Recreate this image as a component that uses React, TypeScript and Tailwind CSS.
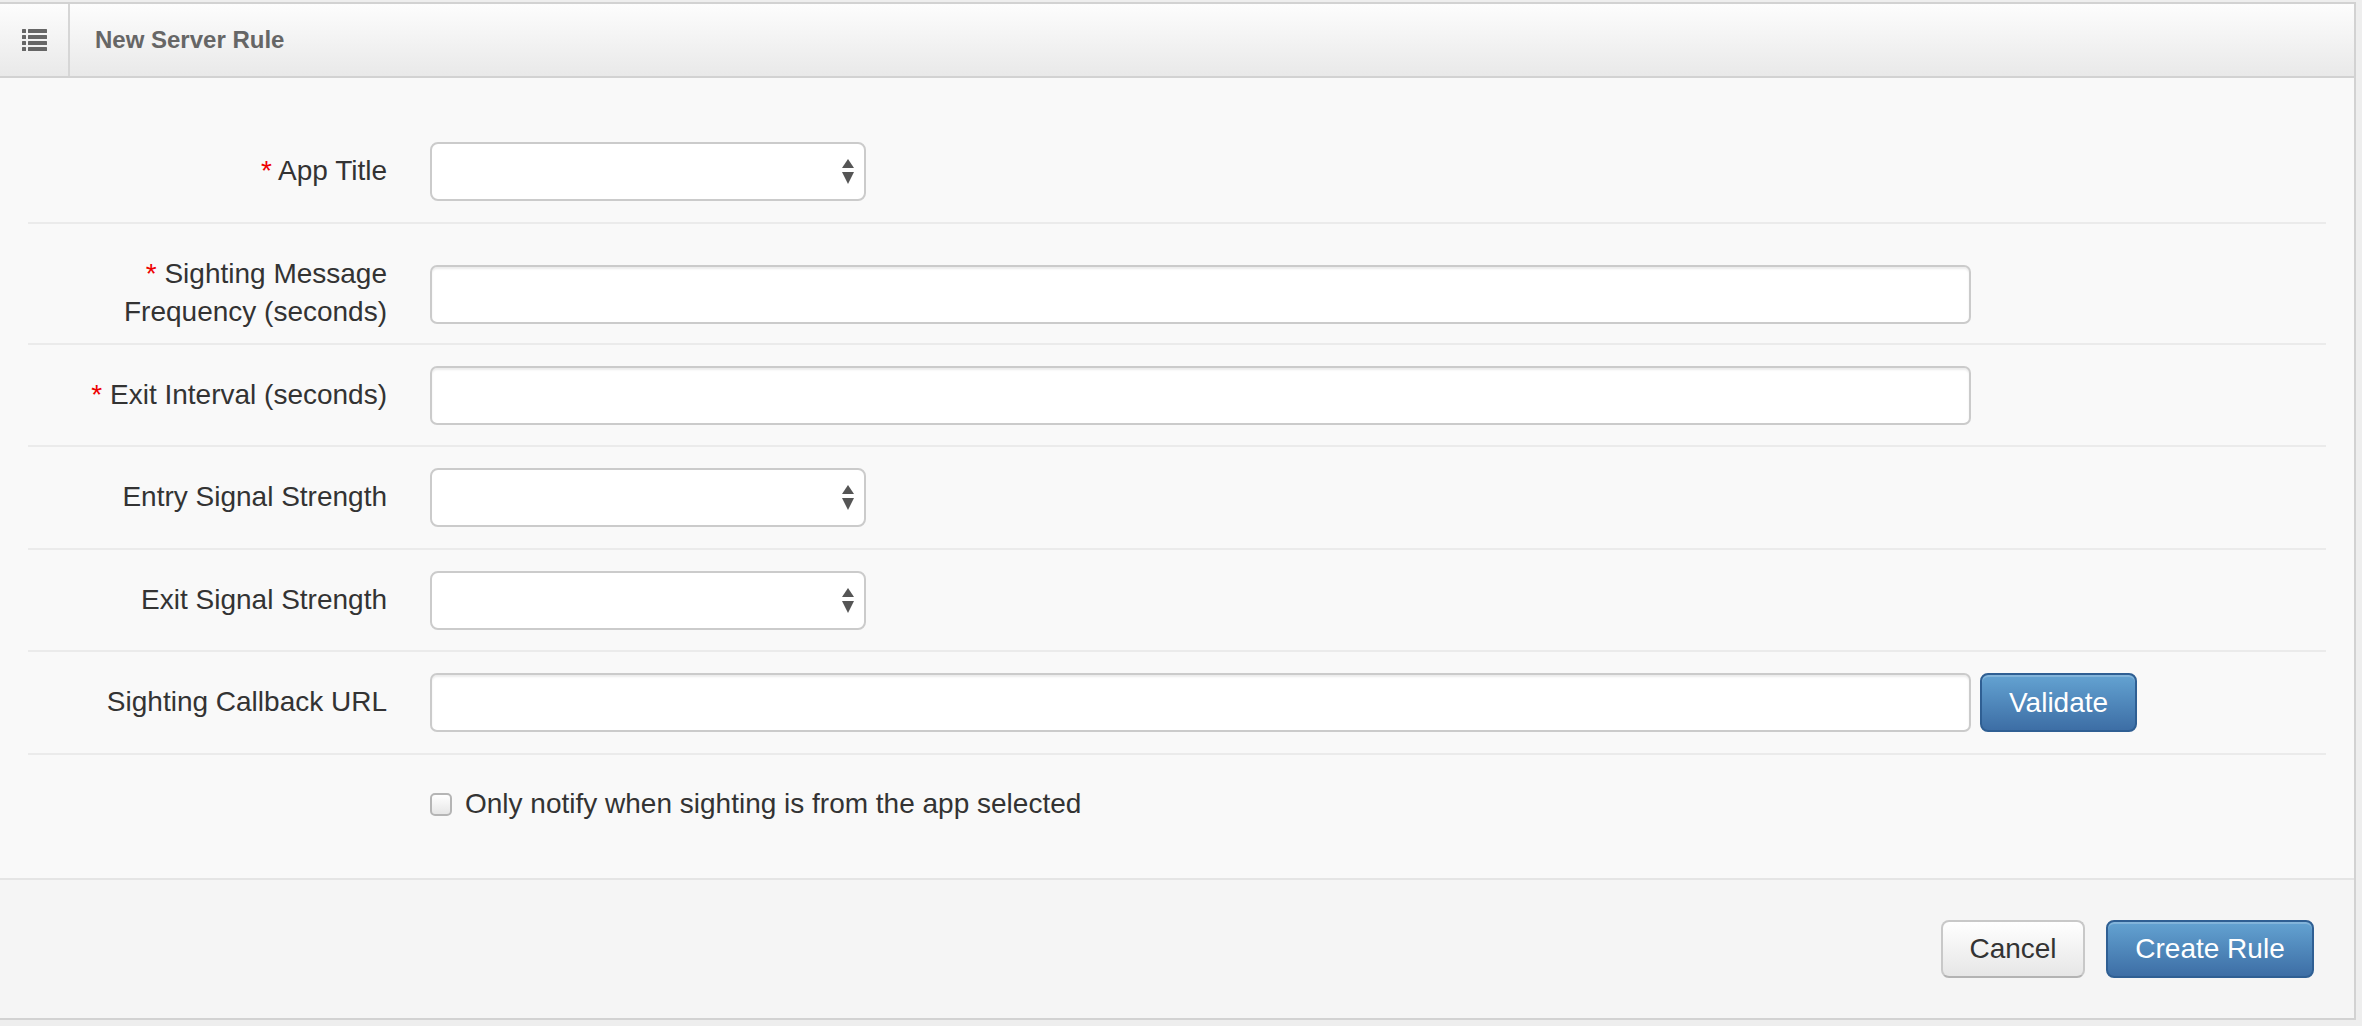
import React from "react";

function ListIcon() {
  return (
    <svg width="25" height="22" viewBox="0 0 25 22" fill="#666">
      {[0, 6, 12, 18].map((y) => (
        <g key={y}>
          <rect x="0" y={y} width="4" height="4" rx="0.5" />
          <rect x="6" y={y} width="19" height="4" rx="0.5" />
        </g>
      ))}
    </svg>
  );
}

function SelectArrows() {
  return (
    <svg width="12" height="25" viewBox="0 0 12 25" fill="#555">
      <polygon points="6,0 12,9 0,9" />
      <polygon points="0,13 12,13 6,25" />
    </svg>
  );
}

function Label({
  children,
  required,
  tall,
}: {
  children: React.ReactNode;
  required?: boolean;
  tall?: boolean;
}) {
  return (
    <div
      className={
        tall
          ? "w-[359px] shrink-0 pt-[10px] pb-[1.5px] text-right text-[28px] leading-[38px] text-[#333]"
          : "w-[359px] shrink-0 pt-[10px] text-right text-[28px] leading-[38px] text-[#333]"
      }
    >
      {required && <span className="text-[#e00]">* </span>}
      {children}
    </div>
  );
}

function SelectBox() {
  return (
    <div className="mb-[10px] flex h-[59px] w-[436px] items-center justify-end rounded-[8px] border-2 border-[#cbcbcb] bg-white pr-[10px]">
      <SelectArrows />
    </div>
  );
}

function TextInput({ flush }: { flush?: boolean }) {
  return (
    <div
      className={
        flush
          ? "h-[59px] w-[1541px] rounded-[7px] border-2 border-[#cbcbcb] bg-white shadow-[inset_0_2px_2px_rgba(0,0,0,0.075)]"
          : "mb-[10px] h-[59px] w-[1541px] rounded-[7px] border-2 border-[#cbcbcb] bg-white shadow-[inset_0_2px_2px_rgba(0,0,0,0.075)]"
      }
    />
  );
}

function Row({ children }: { children: React.ReactNode }) {
  return (
    <div className="mx-[28px] flex items-start border-b-2 border-[#ebebeb] pt-[21px] pb-[10.5px]">
      {children}
    </div>
  );
}

export default function App() {
  return (
    <div
      className="min-h-screen bg-[#eeeeee] pt-[2px]"
      style={{ fontFamily: '"Liberation Sans", Arial, sans-serif' }}
    >
      <div className="w-[2356px] border-y-2 border-r-2 border-[#d2d2d2]">
        {/* Header */}
        <div className="flex h-[74px] border-b-2 border-[#d2d2d2] bg-gradient-to-b from-[#fdfdfd] to-[#e9e9e9]">
          <div className="flex w-[70px] items-center justify-center border-r-2 border-[#d6d6d6]">
            <ListIcon />
          </div>
          <div className="flex items-center pl-[25px] text-[24px] font-bold text-[#666]">
            New Server Rule
          </div>
        </div>

        {/* Form body */}
        <div className="bg-[#f9f9f9] pt-[43px]">
          <Row>
            <Label required>App Title</Label>
            <div className="ml-[43px]">
              <SelectBox />
            </div>
          </Row>
          <Row>
            <Label required tall>
              Sighting Message
              <br />
              Frequency (seconds)
            </Label>
            <div className="ml-[43px] pt-[20px]">
              <TextInput flush />
            </div>
          </Row>
          <Row>
            <Label required>Exit Interval (seconds)</Label>
            <div className="ml-[43px]">
              <TextInput />
            </div>
          </Row>
          <Row>
            <Label>Entry Signal Strength</Label>
            <div className="ml-[43px]">
              <SelectBox />
            </div>
          </Row>
          <Row>
            <Label>Exit Signal Strength</Label>
            <div className="ml-[43px]">
              <SelectBox />
            </div>
          </Row>
          <Row>
            <Label>Sighting Callback URL</Label>
            <div className="ml-[43px] flex items-start gap-[9px]">
              <TextInput />
              <button className="h-[59px] rounded-[8px] border-2 border-[#2f5f93] bg-gradient-to-b from-[#64a3d2] to-[#3d6ea5] px-[27px] text-[28px] text-white shadow-[inset_0_2px_0_rgba(255,255,255,0.2)]">
                Validate
              </button>
            </div>
          </Row>
          <div className="mx-[28px] flex pt-[30.5px] pb-[55px]">
            <div className="ml-[402px] flex items-center gap-[13px] text-[28px] leading-[38px] text-[#333]">
              <span className="h-[23px] w-[22px] rounded-[5px] border-2 border-[#b5b5b5] bg-gradient-to-b from-[#ffffff] to-[#e6e6e6]" />
              <span>Only notify when sighting is from the app selected</span>
            </div>
          </div>
        </div>

        {/* Footer */}
        <div className="flex h-[140px] items-center justify-end gap-[21px] border-t-2 border-[#e5e5e5] bg-[#f5f5f5] pr-[40px]">
          <button className="h-[58px] w-[144px] rounded-[8px] border-2 border-[#c8c8c8] border-b-[#b3b3b3] bg-gradient-to-b from-[#ffffff] to-[#e6e6e6] text-[28px] text-[#333]">
            Cancel
          </button>
          <button className="h-[58px] w-[208px] rounded-[8px] border-2 border-[#2f5f93] bg-gradient-to-b from-[#64a3d2] to-[#3d6ea5] text-[28px] text-white shadow-[inset_0_2px_0_rgba(255,255,255,0.2)]">
            Create Rule
          </button>
        </div>
      </div>
    </div>
  );
}
